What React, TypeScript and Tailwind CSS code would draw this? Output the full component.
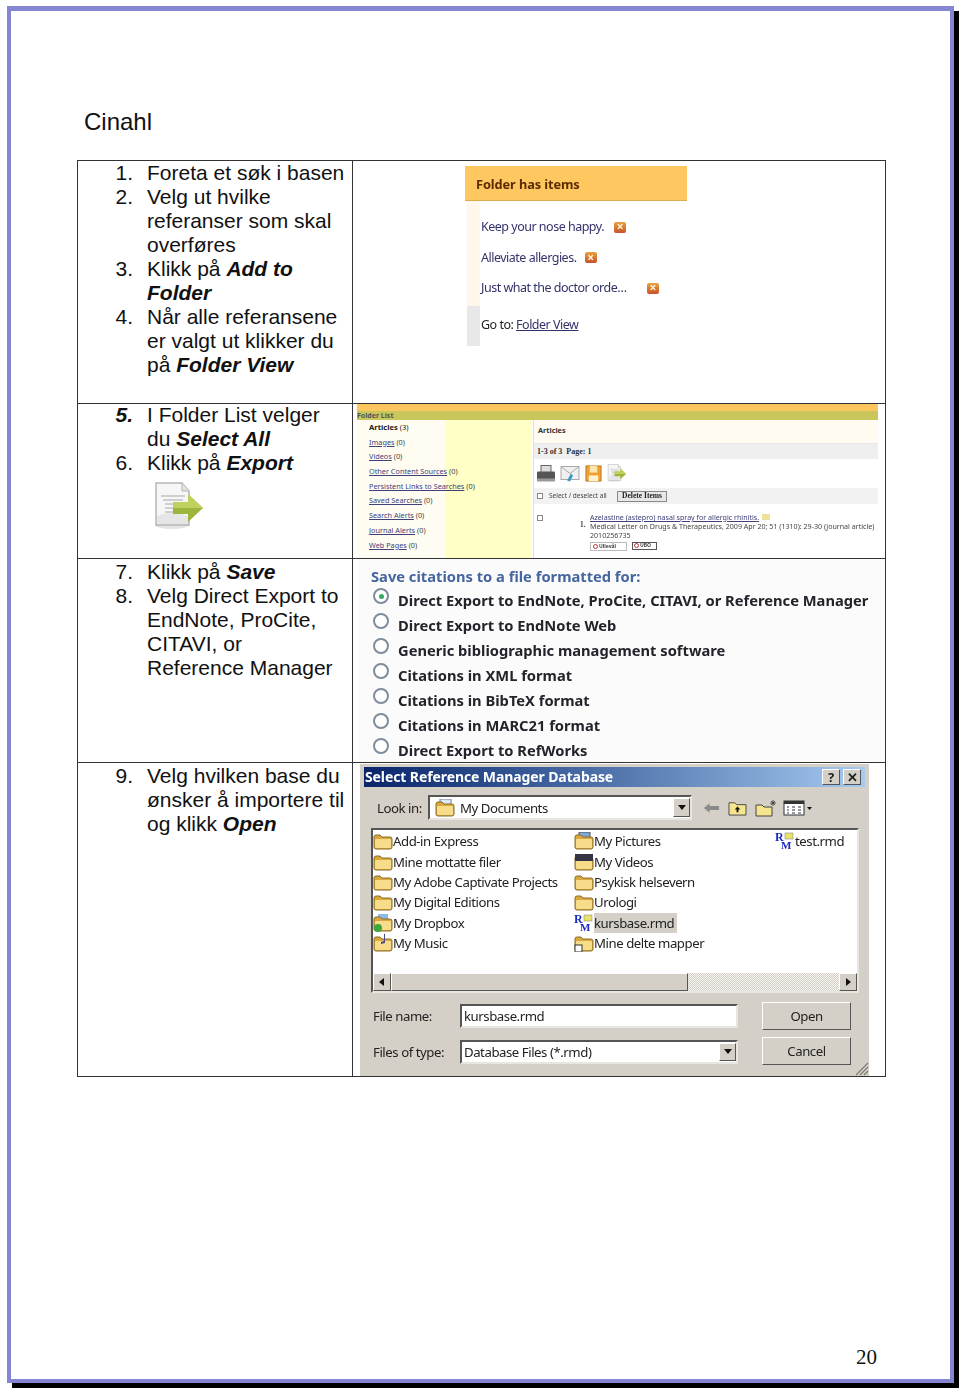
const SANS = "font-['Liberation_Sans',Arial,sans-serif]";
const UI = "font-['Noto_Sans',Tahoma,sans-serif]";

function Step({ n, boldNum, children }: { n: number; boldNum?: boolean; children: React.ReactNode }) {
  return (
    <div className="grid grid-cols-[55px_200px] gap-x-[14px]">
      <div className={`text-right ${boldNum ? "font-bold italic" : ""}`}>{n}.</div>
      <div>{children}</div>
    </div>
  );
}

function B({ children }: { children: React.ReactNode }) {
  return <b className="italic">{children}</b>;
}

function ExportIcon({ className }: { className?: string }) {
  return (
    <svg viewBox="0 0 50 50" className={className}>
      <ellipse cx="19" cy="43" rx="17" ry="4" fill="#e4e4e4" />
      <path d="M3 1h26l7 8v34H3z" fill="#f6f6f6" stroke="#b5b5b5" strokeWidth="1.5" />
      <path d="M29 1v8h7" fill="#e2e2e2" stroke="#b5b5b5" />
      <path d="M8 14h24M10 18h20M12 22h18M12 26h8M12 30h8" stroke="#a8a8a8" strokeWidth="1" />
      <path d="M4 34q14-6 31 0v8H4z" fill="#e6e6e6" />
      <path d="M20 20h15v-8l15 14-15 14v-8H20z" fill="#9cb63c" />
      <path d="M20 20h15v-8l15 14H20z" fill="#c0d05e" />
    </svg>
  );
}

function CloseIcon() {
  return (
    <span className="inline-flex h-[11px] w-[12px] items-center justify-center rounded-[2px] bg-gradient-to-b from-[#e8a23c] to-[#c8502c] text-[12px] font-bold leading-none text-[#fff8e0]">
      ×
    </span>
  );
}

function FolderHasItems() {
  const row = "flex h-[30.5px] items-center";
  return (
    <div className={`w-[222px] blur-[0.3px] ${UI} text-[12.5px] tracking-[-0.5px] text-[#33336b]`}>
      <div className="flex h-[35px] items-center border-b border-[#d8ad50] bg-[#fec75f] pl-[11px] pt-[2px] text-[12.8px] font-bold tracking-[-0.1px] text-[#5c2c00]">
        Folder has items
      </div>
      <div className="flex">
        <div className="ml-[2px] w-[13px] shrink-0">
          <div className="h-[105px] bg-[#fff8ea]" />
          <div className="h-[40px] bg-[#e8e8e8]" />
        </div>
        <div className="pl-[1px] pt-[11px]">
          <div className={`${row} gap-[10px]`}>
            <span>Keep your nose happy.</span>
            <CloseIcon />
          </div>
          <div className={`${row} gap-[8px]`}>
            <span>Alleviate allergies.</span>
            <CloseIcon />
          </div>
          <div className={`${row} gap-[20px]`}>
            <span>Just what the doctor orde…</span>
            <CloseIcon />
          </div>
          <div className="mt-[6px] flex h-[31px] items-center text-[#222]">
            Go to:&nbsp;<span className="text-[#33336b] underline">Folder View</span>
          </div>
        </div>
      </div>
    </div>
  );
}

const folderLinks: [string, number][] = [
  ["Images", 0],
  ["Videos", 0],
  ["Other Content Sources", 0],
  ["Persistent Links to Searches", 0],
  ["Saved Searches", 0],
  ["Search Alerts", 0],
  ["Journal Alerts", 0],
  ["Web Pages", 0],
];

function FolderList() {
  return (
    <div className={`h-[154px] w-[521px] overflow-hidden blur-[0.3px] ${UI} text-[7.3px] text-[#444]`}>
      <div className="h-[7px] bg-[#fdc65e]" />
      <div className="flex h-[9px] items-center bg-[#c9c65c] text-[7px] font-bold leading-none text-[#555]">Folder List</div>
      <div className="flex h-[138px]">
        <div className="relative h-full w-[175px] bg-[#fffdf2] pl-[12px]">
          <div className="absolute bottom-0 left-[88px] top-0 w-[86px] bg-[#ffffc6]" />
          <div className="relative">
            <div className="h-[14.7px] text-[7.6px] leading-[14.7px] text-[#222]">
              <b>Articles</b> (3)
            </div>
            {folderLinks.map(([label, count]) => (
              <div key={label} className="h-[14.7px] leading-[14.7px]">
                <span className="text-[#40407a] underline">{label}</span> ({count})
              </div>
            ))}
          </div>
        </div>
        <div className="ml-[1px] w-[345px] border-l border-[#ddd]">
          <div className="h-[24px] border-b border-[#e8e8e8] bg-[#fffbf0] pl-[4px] pt-[3px] font-bold leading-[14px] text-[#333]">Articles</div>
          <div className="flex h-[15px] items-center bg-[#efefef] pl-[3px] font-['Liberation_Serif',serif] text-[8px] font-bold text-[#333]">
            1-3 of 3&nbsp;&nbsp;Page: 1
          </div>
          <div className="flex h-[29px] items-center gap-[4px] pl-[2px]">
            <svg viewBox="0 0 20 18" className="h-[19px] w-[20px]">
              <rect x="5" y="1" width="10" height="7" fill="#ddd" stroke="#666" />
              <rect x="1" y="7" width="18" height="9" rx="1" fill="#555" />
              <rect x="1" y="14" width="18" height="3" fill="#999" />
            </svg>
            <svg viewBox="0 0 20 18" className="h-[19px] w-[20px]">
              <rect x="1" y="2" width="18" height="13" fill="#f0f0f0" stroke="#aaa" />
              <path d="M1 2l9 7 9-7" fill="none" stroke="#aaa" />
              <path d="M7 16l4-7 2 2-3 6z" fill="#3a9ac0" />
            </svg>
            <svg viewBox="0 0 18 18" className="ml-[1px] h-[19px] w-[17px]">
              <rect x="1" y="1" width="16" height="16" fill="#f0a030" stroke="#b87820" />
              <rect x="5" y="1" width="8" height="7" fill="#fbe6b0" />
              <rect x="4" y="11" width="10" height="6" fill="#fff1d0" />
            </svg>
            <ExportIcon className="h-[19px] w-[21px]" />
          </div>
          <div className="flex h-[16px] items-center bg-[#f2f2f2] pl-[3px] text-[6.5px]">
            <span className="mr-[6px] h-[6px] w-[6px] border border-[#888] bg-white" />
            <span className="w-[68px]">Select / deselect all</span>
            <span className="flex h-[11px] w-[50px] items-center justify-center border border-[#888] bg-[#e8e8e8] font-['Liberation_Serif',serif] text-[7.5px] font-bold text-[#222]">
              Delete Items
            </span>
          </div>
          <div className="flex pl-[3px] pt-[9px]">
            <span className="mt-[2px] h-[6px] w-[6px] shrink-0 border border-[#888] bg-white" />
            <span className="ml-[37px] w-[10px] shrink-0 font-['Liberation_Serif',serif] font-bold">1.</span>
            <div className="whitespace-nowrap text-[7.1px] leading-[9.2px]">
              <div>
                <span className="text-[#40407a] underline">Azelastine (astepro) nasal spray for allergic rhinitis.</span>
                <span className="ml-[3px] inline-block h-[6px] w-[8px] bg-[#ece29a]" />
              </div>
              <div>Medical Letter on Drugs &amp; Therapeutics, 2009 Apr 20; 51 (1310): 29-30 (journal article)</div>
              <div>2010256735</div>
              <div className="mt-[1px] flex gap-[5px] text-[5px] font-bold">
                <span className="flex h-[9px] w-[37px] items-center border border-[#bbb] pl-[2px]">
                  <span className="mr-[1px] h-[5px] w-[5px] rounded-full border border-[#b33]" />
                  Ullevål
                </span>
                <span className="flex h-[8px] w-[25px] items-center border border-[#555] pl-[1px]">
                  <span className="mr-[1px] h-[5px] w-[5px] rounded-full border border-[#b33]" />
                  UBO
                </span>
              </div>
            </div>
          </div>
        </div>
      </div>
    </div>
  );
}

const formats = [
  "Direct Export to EndNote, ProCite, CITAVI, or Reference Manager",
  "Direct Export to EndNote Web",
  "Generic bibliographic management software",
  "Citations in XML format",
  "Citations in BibTeX format",
  "Citations in MARC21 format",
  "Direct Export to RefWorks",
];

function SaveCitations() {
  return (
    <div className={`h-[203px] w-[527px] overflow-hidden bg-[#fbfbfb] pl-[13px] pt-[7px] blur-[0.3px] ${UI} text-[14.7px] font-bold`}>
      <div className="h-[20px] leading-[20px] text-[#45659f]">Save citations to a file formatted for:</div>
      {formats.map((label, i) => (
        <div key={label} className="flex h-[25px] text-[#23232b]">
          <span className="ml-[2px] mt-[2px] flex h-[16px] w-[16px] shrink-0 items-center justify-center rounded-full border-2 border-[#7f8c9c] bg-white">
            {i === 0 && <span className="h-[5px] w-[5px] rounded-full bg-[#3aa860]" />}
          </span>
          <span className="ml-[9px] mt-[4px] whitespace-nowrap leading-[20px]">{label}</span>
        </div>
      ))}
    </div>
  );
}

function Folder({ badge }: { badge?: "shared" | "check" | "music" | "pic" | "video" | "doc" }) {
  return (
    <svg viewBox="0 0 20 18" className="h-[18px] w-[20px] shrink-0">
      {badge === "check" && <rect x="5" y="0" width="10" height="5" fill="#8fb8e6" />}
      {badge === "pic" && <rect x="5" y="0" width="11" height="9" fill="#7fa8d8" stroke="#555" />}
      {badge === "doc" && <rect x="5" y="0" width="11" height="8" fill="#dfe8f5" stroke="#6a7fa0" />}
      <path d="M1 5q0-2 2-2h4l2 2h8q2 0 2 2v8q0 2-2 2H3q-2 0-2-2z" fill="#d9a93f" stroke="#8a6d2a" strokeWidth="1" />
      <path d="M2 8q0-1 1-1h14q1 0 1 1v7q0 1-1 1H3q-1 0-1-1z" fill="#f7dd8a" />
      {badge === "shared" && <rect x="1" y="11" width="7" height="7" fill="#fff" stroke="#333" />}
      {badge === "check" && <circle cx="5" cy="14" r="4" fill="#3aa83a" />}
      {badge === "music" && <path d="M12 0v9l-4 1V8l3-1V0z" fill="#4a4a8a" />}
      {badge === "video" && <rect x="1" y="1" width="18" height="7" fill="#334" />}
    </svg>
  );
}

function RmIcon() {
  return (
    <svg viewBox="0 0 20 20" className="h-[20px] w-[20px] shrink-0">
      <rect x="10" y="2" width="8" height="6" fill="#e6e26a" stroke="#777" strokeWidth="0.5" />
      <text x="0" y="10" fontFamily="Liberation Serif" fontWeight="700" fontSize="12" fill="#1a2ac0">R</text>
      <text x="6" y="18" fontFamily="Liberation Serif" fontWeight="700" fontSize="11" fill="#1a2ac0">M</text>
    </svg>
  );
}

type Entry = { name: string; icon: React.ReactNode; selected?: boolean };

const files: Entry[] = [
  { name: "Add-in Express", icon: <Folder /> },
  { name: "Mine mottatte filer", icon: <Folder /> },
  { name: "My Adobe Captivate Projects", icon: <Folder /> },
  { name: "My Digital Editions", icon: <Folder /> },
  { name: "My Dropbox", icon: <Folder badge="check" /> },
  { name: "My Music", icon: <Folder badge="music" /> },
  { name: "My Pictures", icon: <Folder badge="pic" /> },
  { name: "My Videos", icon: <Folder badge="video" /> },
  { name: "Psykisk helsevern", icon: <Folder /> },
  { name: "Urologi", icon: <Folder /> },
  { name: "kursbase.rmd", icon: <RmIcon />, selected: true },
  { name: "Mine delte mapper", icon: <Folder badge="shared" /> },
  { name: "test.rmd", icon: <RmIcon /> },
];

const raised = "border border-t-white border-l-white border-r-[#555] border-b-[#555] bg-[#d4d0c8]";
const sunken = "border-2 border-t-[#555] border-l-[#555] border-r-[#e8e6e0] border-b-[#e8e6e0] bg-white";

function Arrow({ dir }: { dir: "down" | "left" | "right" }) {
  const d = dir === "down" ? "M1 2h8L5 7z" : dir === "left" ? "M7 1v8L2 5z" : "M3 1v8l5-4z";
  return (
    <svg viewBox="0 0 10 10" className="h-[10px] w-[10px]">
      <path d={d} fill="#111" />
    </svg>
  );
}

function RefManDialog() {
  return (
    <div className={`relative mt-[1px] h-[312px] w-[509px] bg-[#d4d0c8] px-[4px] pt-[3px] blur-[0.3px] ${UI} text-[13.2px] tracking-[-0.45px] text-[#222]`}>
      <div className="flex h-[20px] items-center justify-between bg-gradient-to-r from-[#0a246a] to-[#a6caf0] pl-[1px] pr-[4px] text-[14px] font-bold tracking-[-0.1px] text-white">
        <span>Select Reference Manager Database</span>
        <span className="flex gap-[3px] text-[#222]">
          <span className={`flex h-[16px] w-[18px] items-center justify-center text-[13px] ${raised}`}>?</span>
          <span className={`flex h-[16px] w-[18px] items-center justify-center text-[13px] ${raised}`}>✕</span>
        </span>
      </div>
      <div className="ml-[13px] mt-[8px] flex h-[25px] items-center">
        <span className="w-[51px]">Look in:</span>
        <div className={`flex h-[25px] w-[264px] items-center pl-[5px] ${sunken}`}>
          <Folder badge="doc" />
          <span className="ml-[5px] flex-1">My Documents</span>
          <span className={`flex h-[19px] w-[17px] items-center justify-center ${raised}`}>
            <Arrow dir="down" />
          </span>
        </div>
        <svg viewBox="0 0 18 12" className="ml-[11px] h-[12px] w-[17px]">
          <path d="M1 6l6-5v3h10v4H7v3z" fill="#8a8a8a" />
        </svg>
        <svg viewBox="0 0 20 18" className="ml-[8px] h-[17px] w-[19px]">
          <path d="M1 4h6l2 2h10v11H1z" fill="#f4e58e" stroke="#444" />
          <path d="M10 8l-3 3h2v3h2v-3h2z" fill="#111" />
        </svg>
        <svg viewBox="0 0 22 18" className="ml-[8px] h-[18px] w-[22px]">
          <path d="M1 6h6l2 2h8v9H1z" fill="#f4e58e" stroke="#444" />
          <path d="M18 1v6M15 4h6M16 2l4 4M20 2l-4 4" stroke="#333" strokeWidth="0.8" />
        </svg>
        <svg viewBox="0 0 30 16" className="ml-[6px] h-[16px] w-[30px]">
          <rect x="1" y="1" width="20" height="14" fill="#fff" stroke="#333" />
          <rect x="1" y="1" width="20" height="3" fill="#333" />
          <path d="M4 7h2M9 7h3M15 7h3M4 10h2M9 10h3M15 10h3M4 13h2M9 13h3M15 13h3" stroke="#334" />
          <path d="M24 7h5l-2.5 3z" fill="#111" />
        </svg>
      </div>
      <div className={`ml-[7px] mt-[8px] h-[165px] w-[488px] ${sunken}`}>
        <div className="grid h-[143px] grid-flow-col grid-cols-[201px_201px_1fr] grid-rows-[repeat(6,20.4px)] overflow-hidden pt-[1px]">
          {files.map((f) => (
            <div key={f.name} className="flex items-center">
              {f.icon}
              <span className={`whitespace-nowrap leading-[20px] ${f.selected ? "bg-[#d4d0c8] pr-[3px]" : ""}`}>{f.name}</span>
            </div>
          ))}
        </div>
        <div className="flex h-[18px] bg-[repeating-conic-gradient(#d4d0c8_0_25%,#f5f4f0_0_50%)] bg-[length:2px_2px]">
          <span className={`flex w-[18px] items-center justify-center ${raised}`}>
            <Arrow dir="left" />
          </span>
          <span className={`w-[297px] ${raised}`} />
          <span className="flex-1" />
          <span className={`flex w-[18px] items-center justify-center ${raised}`}>
            <Arrow dir="right" />
          </span>
        </div>
      </div>
      <div className="ml-[9px] mt-[9px] flex">
        <div className="w-[87px] pt-[2px]">
          <div className="flex h-[24px] items-center">File name:</div>
          <div className="mt-[12px] flex h-[24px] items-center">Files of type:</div>
        </div>
        <div className="w-[278px] pt-[2px]">
          <div className={`flex h-[24px] items-center pl-[2px] ${sunken}`}>kursbase.rmd</div>
          <div className={`mt-[12px] flex h-[24px] items-center pl-[2px] ${sunken}`}>
            <span className="flex-1">Database Files (*.rmd)</span>
            <span className={`flex h-[18px] w-[17px] items-center justify-center ${raised}`}>
              <Arrow dir="down" />
            </span>
          </div>
        </div>
        <div className="ml-[24px] w-[89px]">
          <div className={`flex h-[28px] items-center justify-center ${raised}`}>Open</div>
          <div className={`mt-[7px] flex h-[28px] items-center justify-center ${raised}`}>Cancel</div>
        </div>
      </div>
      {/* resize grip */}
      <svg viewBox="0 0 14 14" className="absolute bottom-0 right-0 h-[14px] w-[14px]">
        <path d="M13 1L1 13M13 5L5 13M13 9L9 13" stroke="#7d7a72" strokeWidth="1.2" />
      </svg>
    </div>
  );
}

export default function App() {
  return (
    <div className="h-[1389px] w-[960px] overflow-hidden bg-white pl-[7px] pt-[6px]">
      <div className={`flex h-[1377px] w-[947px] flex-col border-[4px] border-t-[5px] border-[#8585d2] bg-white shadow-[5px_5px_0_#000] ${SANS}`}>
        <h1 className="ml-[73px] mt-[97px] text-[24px] leading-[28px] text-[#111]">Cinahl</h1>

        <div className="ml-[66px] mt-[24px] w-[809px] border-x border-t border-[#333] text-[21px] leading-[24px] text-[#111]">
          <div className="flex h-[243px] border-b border-[#333]">
            <div className="w-[275px] shrink-0 border-r border-[#333]">
              <Step n={1}>Foreta et søk i basen</Step>
              <Step n={2}>Velg ut hvilke referanser som skal overføres</Step>
              <Step n={3}>
                Klikk på <B>Add to Folder</B>
              </Step>
              <Step n={4}>
                Når alle referansene er valgt ut klikker du på <B>Folder View</B>
              </Step>
            </div>
            <div className="pl-[112px] pt-[5px]">
              <FolderHasItems />
            </div>
          </div>

          <div className="flex h-[155px] border-b border-[#333]">
            <div className="w-[275px] shrink-0 border-r border-[#333]">
              <div className="-mt-[1px]">
                <Step n={5} boldNum>
                  I Folder List velger
                  <br />
                  du <B>Select All</B>
                </Step>
                <Step n={6}>
                  Klikk på <B>Export</B>
                </Step>
              </div>
              <ExportIcon className="ml-[75px] mt-[7px] h-[50px] w-[50px]" />
            </div>
            <div className="pl-[4px]">
              <FolderList />
            </div>
          </div>

          <div className="flex h-[204px] border-b border-[#333]">
            <div className="w-[275px] shrink-0 border-r border-[#333] pt-[1px]">
              <Step n={7}>
                Klikk på <B>Save</B>
              </Step>
              <Step n={8}>
                Velg Direct Export to EndNote, ProCite, CITAVI, or
                <br />
                Reference Manager
              </Step>
            </div>
            <div className="pl-[5px]">
              <SaveCitations />
            </div>
          </div>

          <div className="flex h-[314px] border-b border-[#333]">
            <div className="w-[275px] shrink-0 border-r border-[#333] pt-[1px]">
              <Step n={9}>
                Velg hvilken base du ønsker å importere til og klikk <B>Open</B>
              </Step>
            </div>
            <div className="pl-[7px]">
              <RefManDialog />
            </div>
          </div>
        </div>

        <div className="mb-[10px] mr-[73px] mt-auto text-right font-['Liberation_Serif',serif] text-[21px] leading-[24px] text-[#111]">20</div>
      </div>
    </div>
  );
}
